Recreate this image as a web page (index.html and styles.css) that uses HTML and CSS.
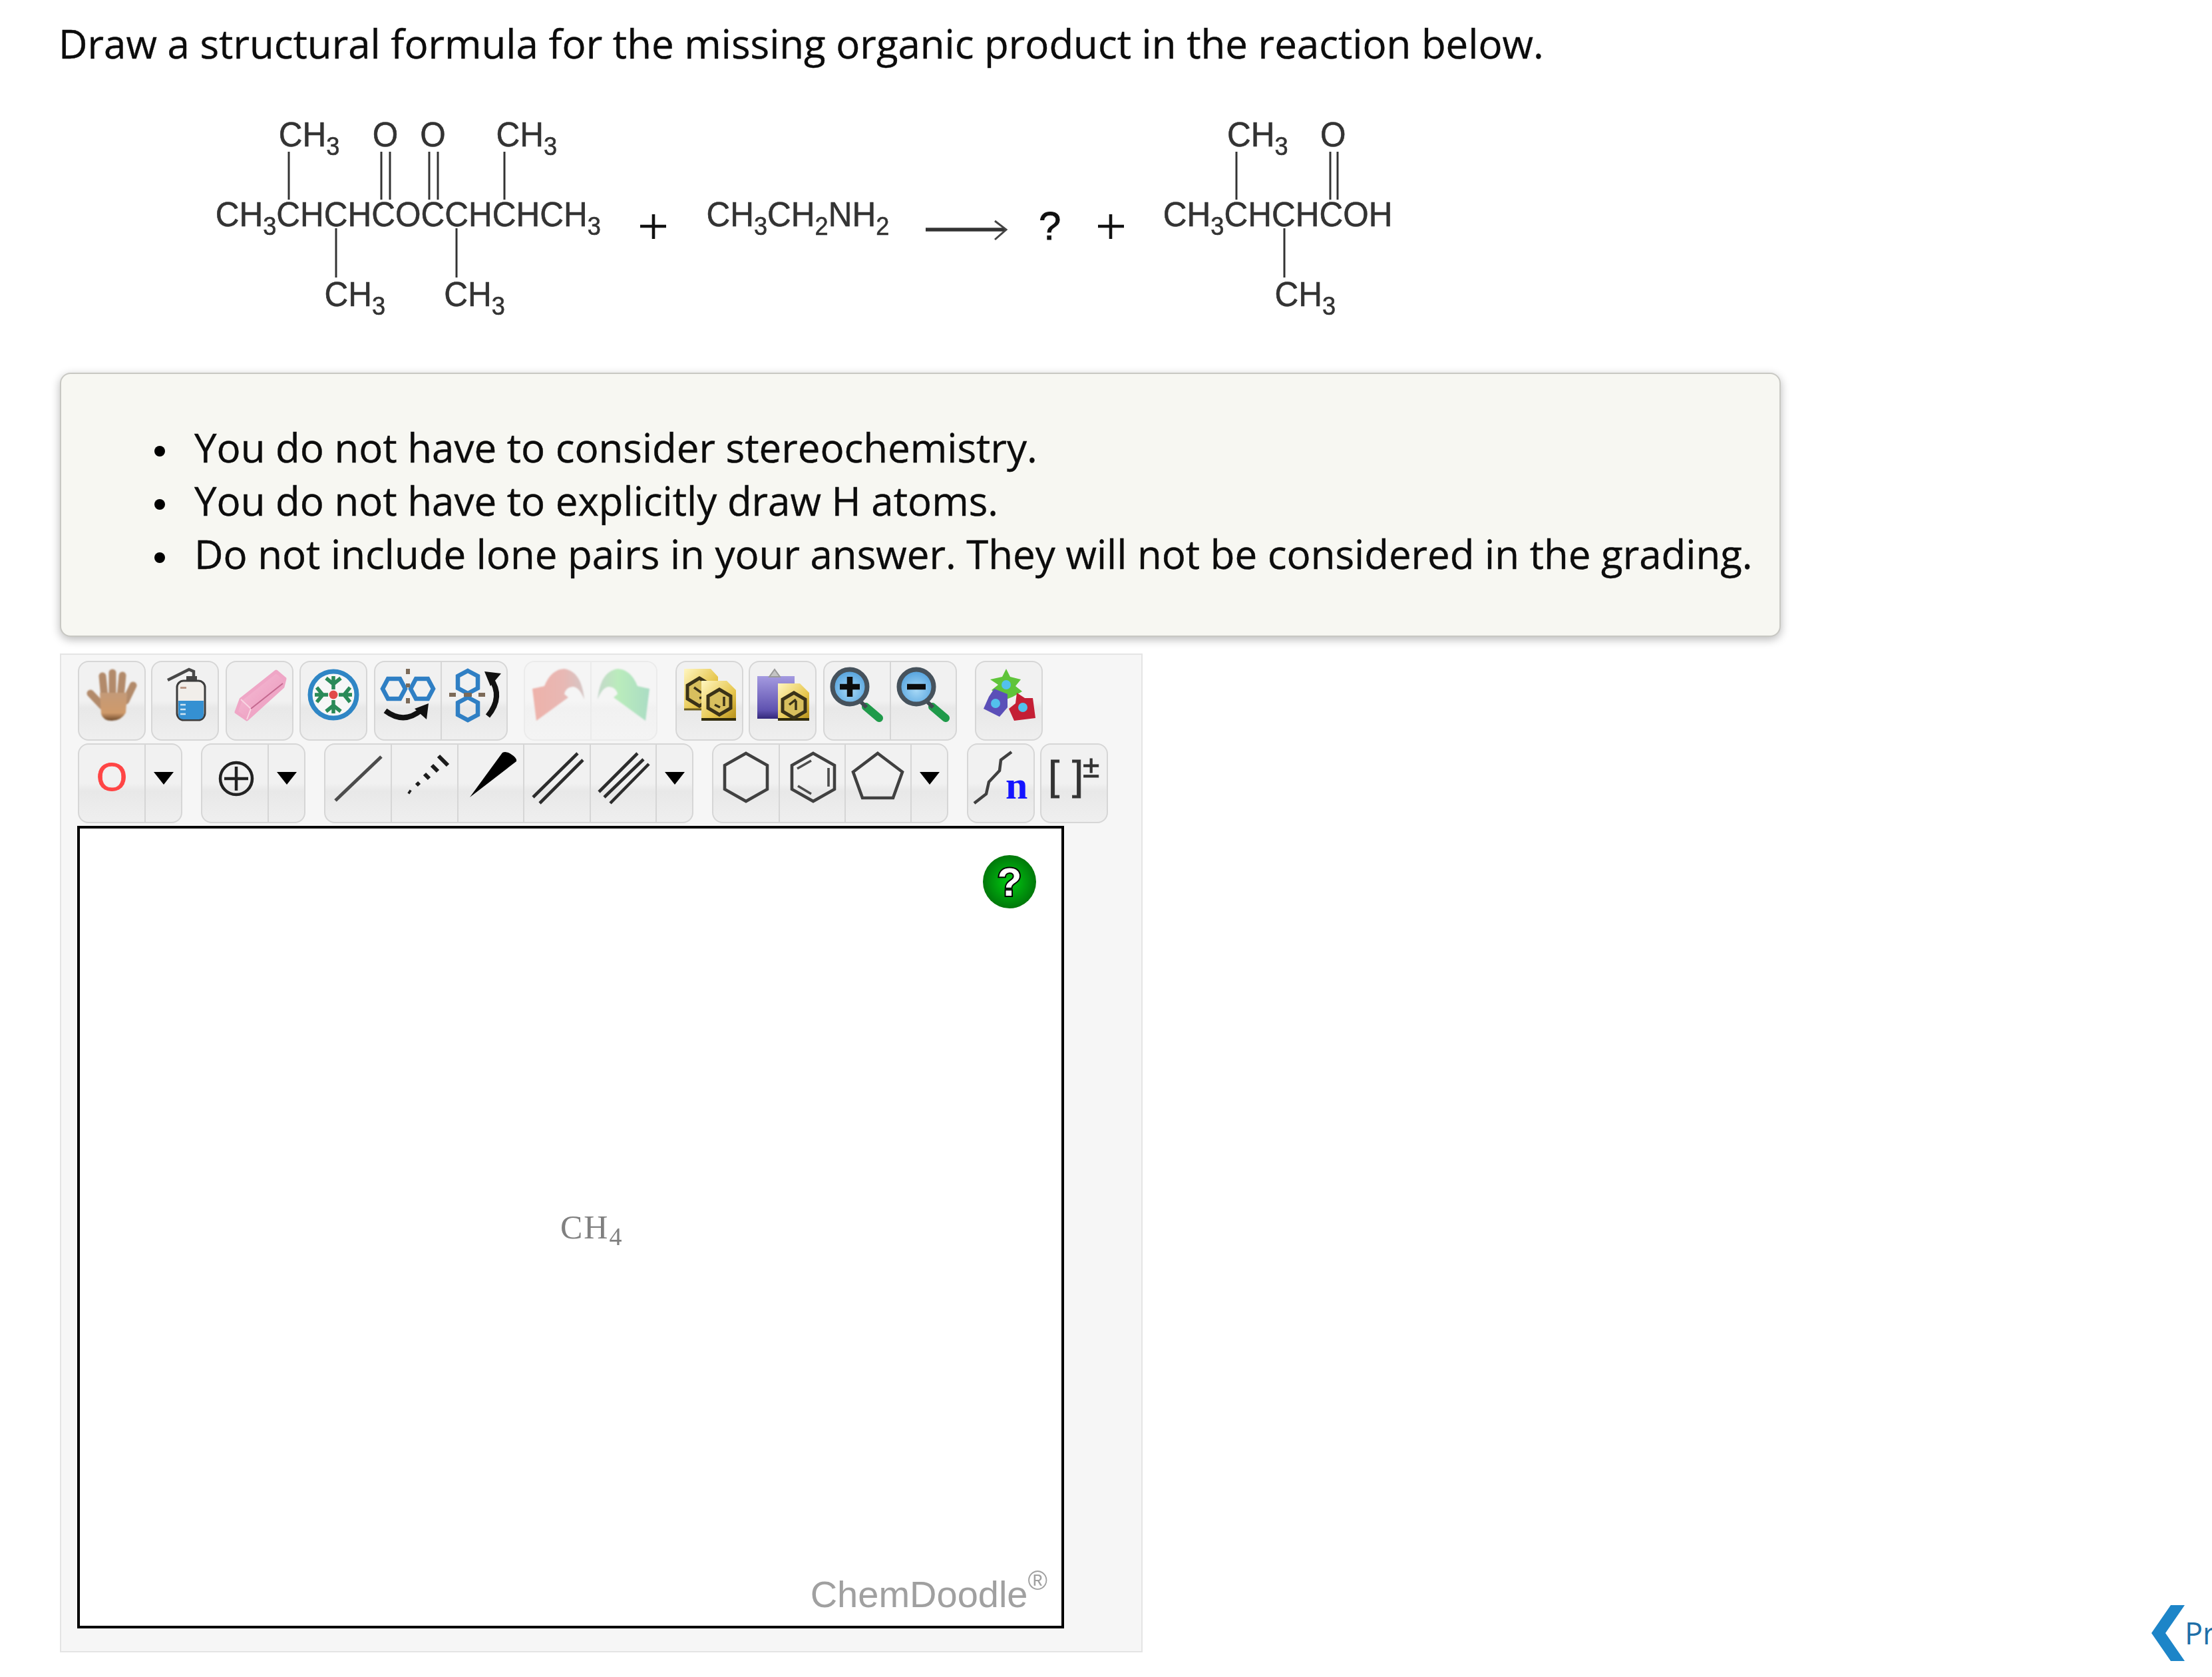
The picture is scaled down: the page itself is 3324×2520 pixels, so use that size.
FILE: index.html
```html
<!DOCTYPE html>
<html lang="en">
<head>
<meta charset="utf-8">
<title>Draw a structural formula</title>
<link rel="stylesheet" href="styles.css">
</head>
<body>
<svg class="defs" aria-hidden="true">
  <defs>
    <linearGradient id="skin" x1="0" y1="0" x2="0" y2="1"><stop offset="0" stop-color="#c49a78"/><stop offset=".72" stop-color="#cf9a6b"/><stop offset="1" stop-color="#6f4a2c"/></linearGradient>
    <linearGradient id="pink" x1="0" y1="0" x2="1" y2="1"><stop offset="0" stop-color="#f6c2d8"/><stop offset=".6" stop-color="#efa6c6"/><stop offset="1" stop-color="#c4688f"/></linearGradient>
    <linearGradient id="undoFill" x1="0" y1="0" x2="1" y2="0"><stop offset="0" stop-color="#eeb2aa"/><stop offset=".6" stop-color="#e8b8b4"/><stop offset="1" stop-color="#d5c6c5"/></linearGradient>
    <linearGradient id="redoFill" x1="1" y1="0" x2="0" y2="0"><stop offset="0" stop-color="#aadcc4"/><stop offset=".6" stop-color="#baecbc"/><stop offset="1" stop-color="#c5d8cb"/></linearGradient>
    <linearGradient id="doc" x1="0" y1="0" x2="1" y2="1"><stop offset="0" stop-color="#fff6c0"/><stop offset=".6" stop-color="#e6c64e"/><stop offset="1" stop-color="#b28c18"/></linearGradient>
    <linearGradient id="clip" x1="0" y1="0" x2="0" y2="1"><stop offset="0" stop-color="#a49ae0"/><stop offset=".8" stop-color="#5f52b0"/><stop offset="1" stop-color="#33287a"/></linearGradient>
    <radialGradient id="lens" cx=".5" cy=".6" r=".6"><stop offset="0" stop-color="#a6d8f6"/><stop offset="1" stop-color="#4f9fdc"/></radialGradient>
    <radialGradient id="help" cx=".5" cy=".5" r=".55"><stop offset="0" stop-color="#00cc10"/><stop offset="1" stop-color="#006f0a"/></radialGradient>
  </defs>
</svg>

<h1 class="prompt">Draw a structural formula for the missing organic product in the reaction below.</h1>

<svg class="reaction" viewBox="280 170 1900 320" width="1900" height="320" role="img" aria-label="Reaction scheme">
  <g class="chem-lines">
    <line x1="434" y1="228" x2="434" y2="300"/>
    <line x1="573" y1="228" x2="573" y2="300"/><line x1="586" y1="228" x2="586" y2="300"/>
    <line x1="645" y1="228" x2="645" y2="300"/><line x1="658" y1="228" x2="658" y2="300"/>
    <line x1="758" y1="228" x2="758" y2="300"/>
    <line x1="505" y1="343" x2="505" y2="417"/><line x1="686" y1="343" x2="686" y2="417"/>
    <line x1="1858" y1="228" x2="1858" y2="300"/>
    <line x1="1999" y1="228" x2="1999" y2="300"/><line x1="2010" y1="228" x2="2010" y2="300"/>
    <line x1="1930" y1="343" x2="1930" y2="417"/>
  </g>
  <g class="chem-text" transform="scale(0.952 1)">
    <text x="440" y="220">CH<tspan class="sub" dy="13">3</tspan></text>
    <text x="588" y="220">O</text>
    <text x="663" y="220">O</text>
    <text x="783" y="220">CH<tspan class="sub" dy="13">3</tspan></text>
    <text x="340" y="340">CH<tspan class="sub" dy="13">3</tspan><tspan dy="-13">CHCHCOCCHCHCH</tspan><tspan class="sub" dy="13">3</tspan></text>
    <text x="512" y="460">CH<tspan class="sub" dy="13">3</tspan></text>
    <text x="701" y="460">CH<tspan class="sub" dy="13">3</tspan></text>
    <text x="1115" y="340">CH<tspan class="sub" dy="13">3</tspan><tspan dy="-13">CH</tspan><tspan class="sub" dy="13">2</tspan><tspan dy="-13">NH</tspan><tspan class="sub" dy="13">2</tspan></text>
    <text x="1937" y="220">CH<tspan class="sub" dy="13">3</tspan></text>
    <text x="2084" y="220">O</text>
    <text x="1836" y="340">CH<tspan class="sub" dy="13">3</tspan><tspan dy="-13">CHCHCOH</tspan></text>
    <text x="2012" y="460">CH<tspan class="sub" dy="13">3</tspan></text>
  </g>
  <text class="query" x="1561" y="360">?</text>
  <g class="chem-plus">
    <line x1="962" y1="340" x2="1001" y2="340"/><line x1="982" y1="322" x2="982" y2="359"/>
    <line x1="1650" y1="340" x2="1689" y2="340"/><line x1="1669" y1="322" x2="1669" y2="359"/>
  </g>
  <line class="chem-arrow" x1="1391" y1="345" x2="1510" y2="345"/>
  <polyline class="chem-head" points="1495,332 1512,345 1495,360"/>
</svg>

<section class="notes">
  <ul class="notes-list">
    <li>You do not have to consider stereochemistry.</li>
    <li>You do not have to explicitly draw H atoms.</li>
    <li>Do not include lone pairs in your answer. They will not be considered in the grading.</li>
  </ul>
</section>

<section class="editor">
  <div class="toolbar toolbar-top">
    <div class="group">
      <div class="btn"><svg class="icon icon-soft" viewBox="0 0 80 80"><g class="hand-fingers"><line x1="26" y1="13" x2="29" y2="44"/><line x1="41" y1="8" x2="41" y2="44"/><line x1="56" y1="12" x2="53" y2="44"/><line x1="72" y1="27" x2="61" y2="50"/><line x1="8" y1="39" x2="26" y2="58"/></g><path fill="url(#skin)" d="M22 38H63L61 68Q54 80 40 80Q27 80 24 70Z"/></svg></div>
    </div>
    <div class="group gap-8">
      <div class="btn"><svg class="icon" viewBox="0 0 80 80"><polyline class="nozzle" points="14,19 46,3 53,6 53,18"/><rect x="42" y="13" width="16" height="9" fill="#444"/><rect x="28" y="20" width="42" height="59" rx="10" fill="#f1eeea" stroke="#3c3c3c" stroke-width="3"/><path d="M30 50H68V70Q68 78 60 78H38Q30 78 30 70Z" fill="#3590d2"/><rect x="33" y="29" width="9" height="3" fill="#b98"/><path d="M33 56h8M33 63h8M33 70h8" stroke="#cfe4f2" stroke-width="2.5"/></svg></div>
    </div>
    <div class="group gap-10">
      <div class="btn"><svg class="icon" viewBox="0 0 80 80"><polygon class="eraser" fill="url(#pink)" points="65,6 78,17 75,29 21,78 5,67 12,48"/><polyline points="12,48 27,62 21,78" fill="none" stroke="#f8d5e2" stroke-width="2"/><line x1="27" y1="62" x2="75" y2="24" stroke="#c4688f" stroke-width="2"/></svg></div>
    </div>
    <div class="group gap-9">
      <div class="btn"><svg class="icon" viewBox="0 0 80 80"><circle cx="40" cy="41" r="35" fill="#f7f7f7" stroke="#2f86c5" stroke-width="7"/><g class="flake"><path d="M40 33V13M29 16L40 25L51 16"/><path d="M40 49V69M29 66L40 57L51 66"/><path d="M32 41H12M15 30L24 41L15 52"/><path d="M48 41H68M65 30L56 41L65 52"/></g><circle cx="40" cy="41" r="6.5" fill="#e24a4a"/></svg></div>
    </div>
    <div class="group gap-10">
      <div class="btn"><svg class="icon" viewBox="0 0 80 80"><g class="hex-blue"><polygon transform="translate(19 32)" points="-17,0 -9,-15 9,-15 17,0 9,15 -9,15"/><polygon transform="translate(61 32)" points="-17,0 -9,-15 9,-15 17,0 9,15 -9,15"/></g><path class="dash-brown" d="M40 2V10M40 24V30M40 46V54"/><path class="curve-arrow" d="M6 65Q34 86 60 64"/><polygon points="71,54 68,78 50,62" fill="#111"/></svg></div>
      <div class="btn"><svg class="icon" viewBox="0 0 80 80"><g class="hex-blue"><polygon transform="translate(30 22)" points="0,-17 15,-9 15,9 0,17 -15,9 -15,-9"/><polygon transform="translate(30 62)" points="0,-17 15,-9 15,9 0,17 -15,9 -15,-9"/></g><path class="dash-brown" d="M2 41H12M24 41H36M46 41H56"/><path class="curve-arrow" d="M60 73Q84 44 64 16"/><polygon points="55,6 80,9 64,28" fill="#111"/></svg></div>
    </div>
    <div class="group group-off gap-24">
      <div class="btn"><svg class="icon icon-soft" viewBox="0 0 80 80"><path fill="url(#undoFill)" d="M2 32L20 28Q30 3 50 2Q76 6 80 48Q72 28 62 29Q52 30 50 40L56 45L8 80Z"/></svg></div>
      <div class="btn"><svg class="icon icon-soft" viewBox="0 0 80 80"><path fill="url(#redoFill)" d="M78 32L60 28Q50 3 30 2Q4 6 0 48Q8 28 18 29Q28 30 30 40L24 45L72 80Z"/></svg></div>
    </div>
    <div class="group gap-27">
      <div class="btn"><svg class="icon" viewBox="0 0 80 80"><path fill="url(#doc)" d="M2 2H42L53 14V64H2Z"/><path d="M2 63H30" stroke="#6a5c20" stroke-width="3"/><polygon transform="translate(25 37)" class="hex-dark" points="0,-21 18,-10 18,10 0,21 -18,10 -18,-10"/><path class="hex-in" d="M17 30L28 38M25 46L34 44"/><path fill="url(#doc)" d="M28 20H66L80 34V80H28Z"/><path d="M28 78H80" stroke="#2f2a0c" stroke-width="4"/><polygon transform="translate(55 52)" class="hex-dark" points="0,-19 17,-9 17,9 0,19 -17,9 -17,-9"/><path class="hex-in" d="M62 44V58M48 56L56 60"/></svg></div>
    </div>
    <div class="group gap-8">
      <div class="btn"><svg class="icon" viewBox="0 0 80 80"><rect x="2" y="13" width="56" height="64" fill="url(#clip)"/><path d="M20 14L28 3L36 14Z" fill="#c4c4c4" stroke="#999" stroke-width="2"/><path fill="url(#doc)" d="M33 24H66L80 38V80H33Z"/><path d="M33 78H80" stroke="#2f2a0c" stroke-width="4"/><polygon transform="translate(57 57)" class="hex-dark" points="0,-19 17,-9 17,9 0,19 -17,9 -17,-9"/><path class="hex-in" d="M50 56L60 48M60 50V64"/></svg></div>
    </div>
    <div class="group gap-10">
      <div class="btn"><svg class="icon" viewBox="0 0 80 80"><line class="handle" x1="53" y1="59" x2="73" y2="76"/><line class="neck" x1="44" y1="50" x2="54" y2="60"/><circle class="lens" cx="29" cy="29" r="26"/><path class="lens-mark" d="M14 29H44M29 14V44"/></svg></div>
      <div class="btn"><svg class="icon" viewBox="0 0 80 80"><line class="handle" x1="53" y1="59" x2="73" y2="76"/><line class="neck" x1="44" y1="50" x2="54" y2="60"/><circle class="lens" cx="29" cy="29" r="26"/><path class="lens-mark" d="M15 29H43"/></svg></div>
    </div>
    <div class="group gap-27">
      <div class="btn"><svg class="icon" viewBox="0 0 80 80"><polygon fill="#5fc43a" points="36,2 42,14 58,18 50,28 60,36 46,44 36,48 24,42 14,34 24,26 12,18 30,14"/><polygon fill="#5b4fb8" points="18,32 38,40 38,60 26,74 2,62 10,44"/><polygon fill="#c41f35" points="52,38 64,46 76,46 80,76 48,80 40,62 50,54"/><circle cx="36" cy="26" r="7" fill="#53c1ec"/><circle cx="20" cy="54" r="7" fill="#53c1ec"/><circle cx="61" cy="60" r="7" fill="#53c1ec"/></svg></div>
    </div>
  </div>

  <div class="toolbar toolbar-bottom">
    <div class="group">
      <div class="btn atom">O</div>
      <div class="btn btn-caret"><span class="caret"></span></div>
    </div>
    <div class="group gap-28">
      <div class="btn"><svg class="icon" viewBox="0 0 80 80"><circle class="ring-plus" cx="42" cy="40" r="24"/><path class="ring-plus" d="M24 40H60M42 22V58"/></svg></div>
      <div class="btn btn-caret"><span class="caret"></span></div>
    </div>
    <div class="group group-bonds gap-28">
      <div class="btn"><svg class="icon" viewBox="0 0 80 80"><line class="bond" x1="6" y1="73" x2="75" y2="7"/></svg></div>
      <div class="btn"><svg class="icon" viewBox="0 0 80 80"><path class="bond-dash" d="M16 59L19 61M28 46L32 50M40 33L47 40M51 20L60 29M61 6L75 20"/></svg></div>
      <div class="btn"><svg class="icon" viewBox="0 0 80 80"><path d="M9 68L58 1Q64 -2 72 4Q80 9 79 14Z" fill="#000"/></svg></div>
      <div class="btn"><svg class="icon" viewBox="0 0 80 80"><line class="bond dark" x1="4" y1="68" x2="71" y2="2"/><line class="bond dark" x1="14" y1="77" x2="79" y2="12"/></svg></div>
      <div class="btn"><svg class="icon" viewBox="0 0 80 80"><line class="bond dark" x1="4" y1="60" x2="62" y2="2"/><line class="bond dark" x1="12" y1="68" x2="71" y2="11"/><line class="bond dark" x1="21" y1="77" x2="79" y2="18"/></svg></div>
      <div class="btn btn-caret"><span class="caret"></span></div>
    </div>
    <div class="group gap-28">
      <div class="btn"><svg class="icon" viewBox="0 0 80 80"><polygon class="ring" points="40,2 72,20 72,56 40,74 8,56 8,20"/></svg></div>
      <div class="btn"><svg class="icon" viewBox="0 0 80 80"><polygon class="ring" points="41,2 73,20 73,56 41,74 9,56 9,20"/><path class="ring-in" d="M17 25L38 13M64 24V52M18 51L38 63"/></svg></div>
      <div class="btn"><svg class="icon" viewBox="0 0 80 80"><polygon class="ring" points="39,2 76,30 62,69 16,69 2,30"/></svg></div>
      <div class="btn btn-caret"><span class="caret"></span></div>
    </div>
    <div class="group gap-28">
      <div class="btn"><svg class="icon" viewBox="0 0 80 80"><path class="chain" d="M0 77L18 63L22 45L38 28L40 12L56 0"/><text class="poly-n" x="47" y="70">n</text></svg></div>
    </div>
    <div class="group gap-8">
      <div class="btn"><svg class="icon" viewBox="0 0 80 80"><text class="bracket" x="1" y="56">[</text><text class="bracket" x="37" y="56">]</text><text class="charge" x="53" y="38">±</text></svg></div>
    </div>
  </div>

  <div class="canvas">
    <svg class="help" viewBox="0 0 80 80" width="80" height="80"><circle cx="40" cy="40" r="40" fill="url(#help)"/><text class="help-mark" x="40" y="61">?</text></svg>
    <div class="mol">CH<sub class="mol-sub">4</sub></div>
    <div class="brand">ChemDoodle<sup class="brand-reg">®</sup></div>
  </div>
</section>

<a class="prev" href="#"><svg class="prev-chevron" viewBox="0 0 50 84" width="50" height="84"><polygon points="29,0 50,0 21,42 50,84 29,84 0,42"/></svg><span class="prev-text">Previous</span></a>
</body>
</html>
```

FILE: styles.css
```css
html, body {
  margin: 0;
  padding: 0;
}
body {
  width: 3324px;
  height: 2520px;
  position: relative;
  overflow: hidden;
  background: #fff;
  color: #0c0c0c;
  font-family: "Open Sans", "Noto Sans", sans-serif;
}
.defs {
  position: absolute;
  width: 0;
  height: 0;
}
.prompt {
  margin: 0;
  padding: 25px 0 0 88px;
  font-size: 60px;
  line-height: 80px;
  font-weight: 400;
  -webkit-text-stroke: 0.4px #0c0c0c;
  filter: blur(0.4px);
}
.reaction {
  display: block;
  margin: 65px 0 0 280px;
  filter: blur(0.7px);
}
.chem-lines line { stroke: #333; stroke-width: 3; }
.chem-text text {
  font-family: "Liberation Sans", Arial, sans-serif;
  font-size: 52px;
  fill: #333;
  stroke: #333;
  stroke-width: 0.6;
}
.chem-text .sub { font-size: 38px; }
.query {
  font-family: "Liberation Sans", Arial, sans-serif;
  font-size: 60px;
  fill: #111;
  stroke: #111;
  stroke-width: 0.9;
}
.chem-plus line { stroke: #111; stroke-width: 4.6; }
.chem-arrow { stroke: #333; stroke-width: 5.5; }
.chem-head { fill: none; stroke: #444; stroke-width: 3; }

.notes {
  box-sizing: border-box;
  width: 2586px;
  height: 397px;
  margin: 70px 0 0 90px;
  padding: 70px 0 0 0;
  background: #f7f7f2;
  border: 2px solid #c8c8c3;
  border-radius: 16px;
  box-shadow: 0 4px 14px rgba(0, 0, 0, 0.28);
}
.notes-list {
  margin: 0;
  padding: 0 0 0 200px;
  list-style: none;
  font-size: 60px;
  line-height: 80px;
  -webkit-text-stroke: 0.4px #0c0c0c;
  filter: blur(0.4px);
}
.notes-list li {
  position: relative;
}
.notes-list li::before {
  content: "";
  position: absolute;
  left: -60px;
  top: 38px;
  width: 16px;
  height: 16px;
  border-radius: 50%;
  background: #000;
}

.editor {
  box-sizing: border-box;
  width: 1627px;
  height: 1501px;
  margin: 25px 0 0 90px;
  padding: 9px 0 0 24px;
  background: #f6f6f6;
  border: 2px solid #e4e4e4;
}
.toolbar {
  display: flex;
  height: 120px;
  margin: 0 0 4px 1px;
}
.group {
  display: flex;
  box-sizing: border-box;
  border: 2px solid #d6d6d6;
  border-radius: 16px;
  overflow: hidden;
  background: linear-gradient(#f1f1f1 0, #f1f1f1 50%, #e8e8e8 60%, #efefef 100%);
}
.group-off {
  border-color: #ebebeb;
  background: linear-gradient(#f5f5f5 0, #f5f5f5 50%, #f1f1f1 60%, #f4f4f4 100%);
}
.gap-8 { margin-left: 8px; }
.gap-9 { margin-left: 9px; }
.gap-10 { margin-left: 10px; }
.gap-24 { margin-left: 24px; }
.gap-27 { margin-left: 27px; }
.gap-28 { margin-left: 28px; }
.btn {
  box-sizing: border-box;
  width: 98px;
  display: flex;
  justify-content: center;
  align-items: flex-start;
}
.btn + .btn {
  width: 99px;
  border-left: 2px solid #d6d6d6;
}
.group-bonds .btn + .btn { width: 99.5px; }
.group-off .btn + .btn { border-left-color: #ebebeb; }
.toolbar-top .btn { padding-top: 8px; }
.toolbar-bottom .btn { padding-top: 11px; }
.btn.btn-caret, .group-bonds .btn.btn-caret { width: 55px; }
.icon {
  display: block;
  width: 80px;
  height: 80px;
  flex: none;
  overflow: visible;
  filter: blur(0.7px);
}
.icon-soft { filter: blur(1.1px); }
.caret {
  display: block;
  width: 0;
  height: 0;
  margin-top: 30px;
  border-left: 15px solid transparent;
  border-right: 15px solid transparent;
  border-top: 19px solid #000;
}
.atom {
  font-family: "Liberation Sans", Arial, sans-serif;
  font-size: 60px;
  line-height: 76px;
  color: #ff4545;
  -webkit-text-stroke: 0.8px #ff4545;
  filter: blur(0.5px);
}
.hand-fingers line { stroke: #b28a6a; stroke-width: 11; stroke-linecap: round; }
.nozzle { fill: none; stroke: #484848; stroke-width: 4.5; }
.eraser { stroke: #efa6c6; stroke-width: 5; stroke-linejoin: round; }
.flake path { fill: none; stroke: #2a8a58; stroke-width: 5.5; }
.hex-blue polygon { fill: none; stroke: #2f7fc4; stroke-width: 6.5; }
.dash-brown { stroke: #7c6a58; stroke-width: 6; fill: none; }
.curve-arrow { fill: none; stroke: #111; stroke-width: 8; }
.hex-dark { fill: #d8bf5e; stroke: #3a3218; stroke-width: 5; }
.hex-in { fill: none; stroke: #3a3218; stroke-width: 3.5; }
.handle { stroke: #1f9a4a; stroke-width: 12; stroke-linecap: round; }
.neck { stroke: #3f4a50; stroke-width: 6; }
.lens { fill: url(#lens); stroke: #46525c; stroke-width: 7; }
.lens-mark { fill: none; stroke: #0c0c0c; stroke-width: 8.5; }
.ring-plus { fill: none; stroke: #222; stroke-width: 4.5; }
.bond { stroke: #4c4c4c; stroke-width: 5; }
.bond.dark { stroke: #2c2c2c; stroke-width: 4.6; }
.bond-dash { fill: none; stroke: #1c1c1c; stroke-width: 6; }
.ring { fill: none; stroke: #404040; stroke-width: 4.6; }
.ring-in { fill: none; stroke: #4c4c4c; stroke-width: 3.6; }
.chain { fill: none; stroke: #404040; stroke-width: 4.5; }
.poly-n {
  font-family: "Liberation Serif", "Times New Roman", serif;
  font-weight: 700;
  font-size: 60px;
  fill: #1414ff;
}
.bracket {
  font-family: "Liberation Sans", Arial, sans-serif;
  font-size: 62px;
  fill: #333;
  stroke: #333;
  stroke-width: 0.8;
}
.charge {
  font-family: "Liberation Sans", Arial, sans-serif;
  font-size: 46px;
  fill: #333;
  stroke: #333;
  stroke-width: 0.8;
}

.canvas {
  box-sizing: border-box;
  position: relative;
  width: 1483px;
  height: 1206px;
  background: #fff;
  border: 4px solid #000;
}
.help {
  position: absolute;
  left: 1357px;
  top: 40px;
  filter: blur(0.5px);
}
.help-mark {
  font-family: "Liberation Sans", Arial, sans-serif;
  font-weight: 700;
  font-size: 60px;
  text-anchor: middle;
  fill: #fff;
  stroke: #000;
  stroke-width: 4;
  paint-order: stroke;
}
.mol {
  position: absolute;
  left: 722px;
  top: 569px;
  font-family: "Liberation Serif", "Times New Roman", serif;
  font-size: 50px;
  line-height: 60px;
  letter-spacing: 2px;
  color: #808080;
  filter: blur(0.5px);
}
.mol-sub {
  font-size: 38px;
  line-height: 0;
  vertical-align: -10px;
}
.brand {
  position: absolute;
  right: 21px;
  bottom: 12px;
  font-family: "Liberation Sans", Arial, sans-serif;
  font-size: 56px;
  line-height: 70px;
  color: #a0a0a0;
  filter: blur(0.5px);
}
.brand-reg {
  font-size: 40px;
  line-height: 0;
  vertical-align: 26px;
}
.prev {
  position: absolute;
  left: 3233px;
  top: 2412px;
  width: 91px;
  height: 84px;
  display: flex;
  overflow: hidden;
  color: #1e6fa8;
  text-decoration: none;
  font-size: 45px;
  line-height: 84px;
  white-space: nowrap;
}
.prev-chevron { flex: none; fill: #1d85c8; }
```
